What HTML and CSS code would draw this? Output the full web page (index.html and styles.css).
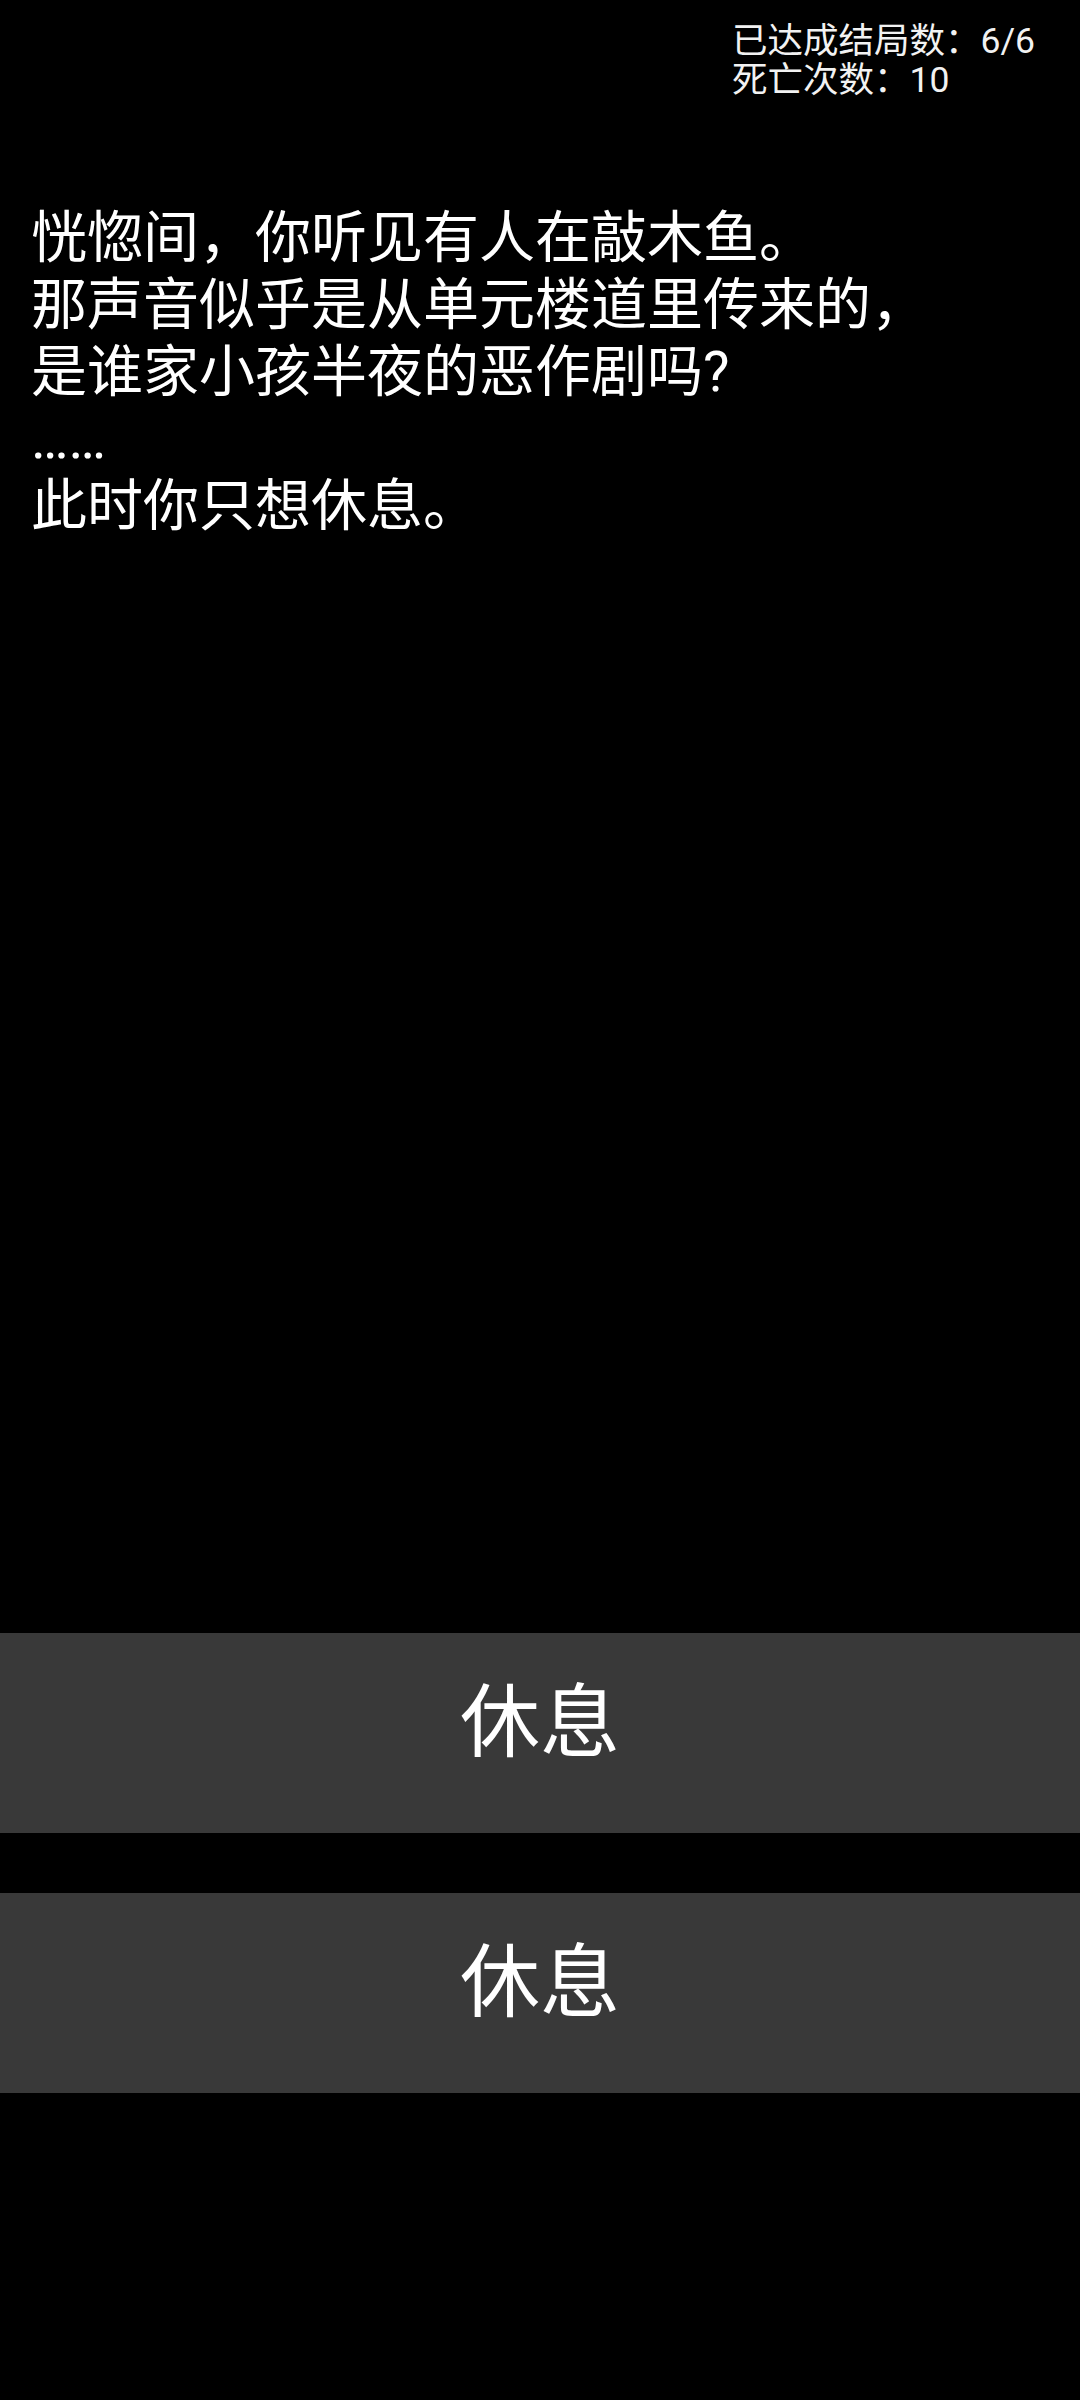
FILE: index.html
```html
<!DOCTYPE html>
<html lang="zh-CN">
<head>
<meta charset="utf-8">
<title>休息</title>
<link rel="stylesheet" href="styles.css">
</head>
<body>
<div class="page">
  <header class="stats">
    <div class="stats-box">
      <div class="stat">已达成结局数：6/6</div>
      <div class="stat">死亡次数：10</div>
    </div>
  </header>
  <main class="story">
    <p class="line">恍惚间，你听见有人在敲木鱼。</p>
    <p class="line">那声音似乎是从单元楼道里传来的，</p>
    <p class="line">是谁家小孩半夜的恶作剧吗?</p>
    <p class="line">……</p>
    <p class="line">此时你只想休息。</p>
  </main>
  <section class="choices">
    <button class="choice">休息</button>
    <button class="choice">休息</button>
  </section>
</div>
</body>
</html>
```

FILE: styles.css
```css
html, body {
  margin: 0;
  padding: 0;
  background: #000;
}
body {
  font-family: Roboto, "Noto Sans CJK SC", sans-serif;
  color: #fff;
}
.page {
  display: flex;
  flex-direction: column;
  min-height: 2400px;
}
.stats {
  display: flex;
  justify-content: flex-end;
  padding: 22px 44px 0 0;
}
.stats-box {
  width: 304px;
}
.stat {
  font-size: 35.5px;
  line-height: 39px;
  color: #f2f2f2;
  white-space: nowrap;
}
.story {
  padding: 105px 31px 0 31px;
}
.line {
  margin: 0;
  font-size: 56px;
  line-height: 67px;
  color: #fff;
  white-space: nowrap;
}
.choices {
  margin-top: auto;
  padding-bottom: 307px;
  display: flex;
  flex-direction: column;
  gap: 60px;
}
.choice {
  display: block;
  width: 100%;
  height: 200px;
  margin: 0;
  border: 0;
  padding: 0 0 20px 0;
  background: #393939;
  color: #fff;
  font-family: Roboto, "Noto Sans CJK SC", sans-serif;
  font-size: 80px;
  line-height: 94px;
  text-align: center;
}
```
